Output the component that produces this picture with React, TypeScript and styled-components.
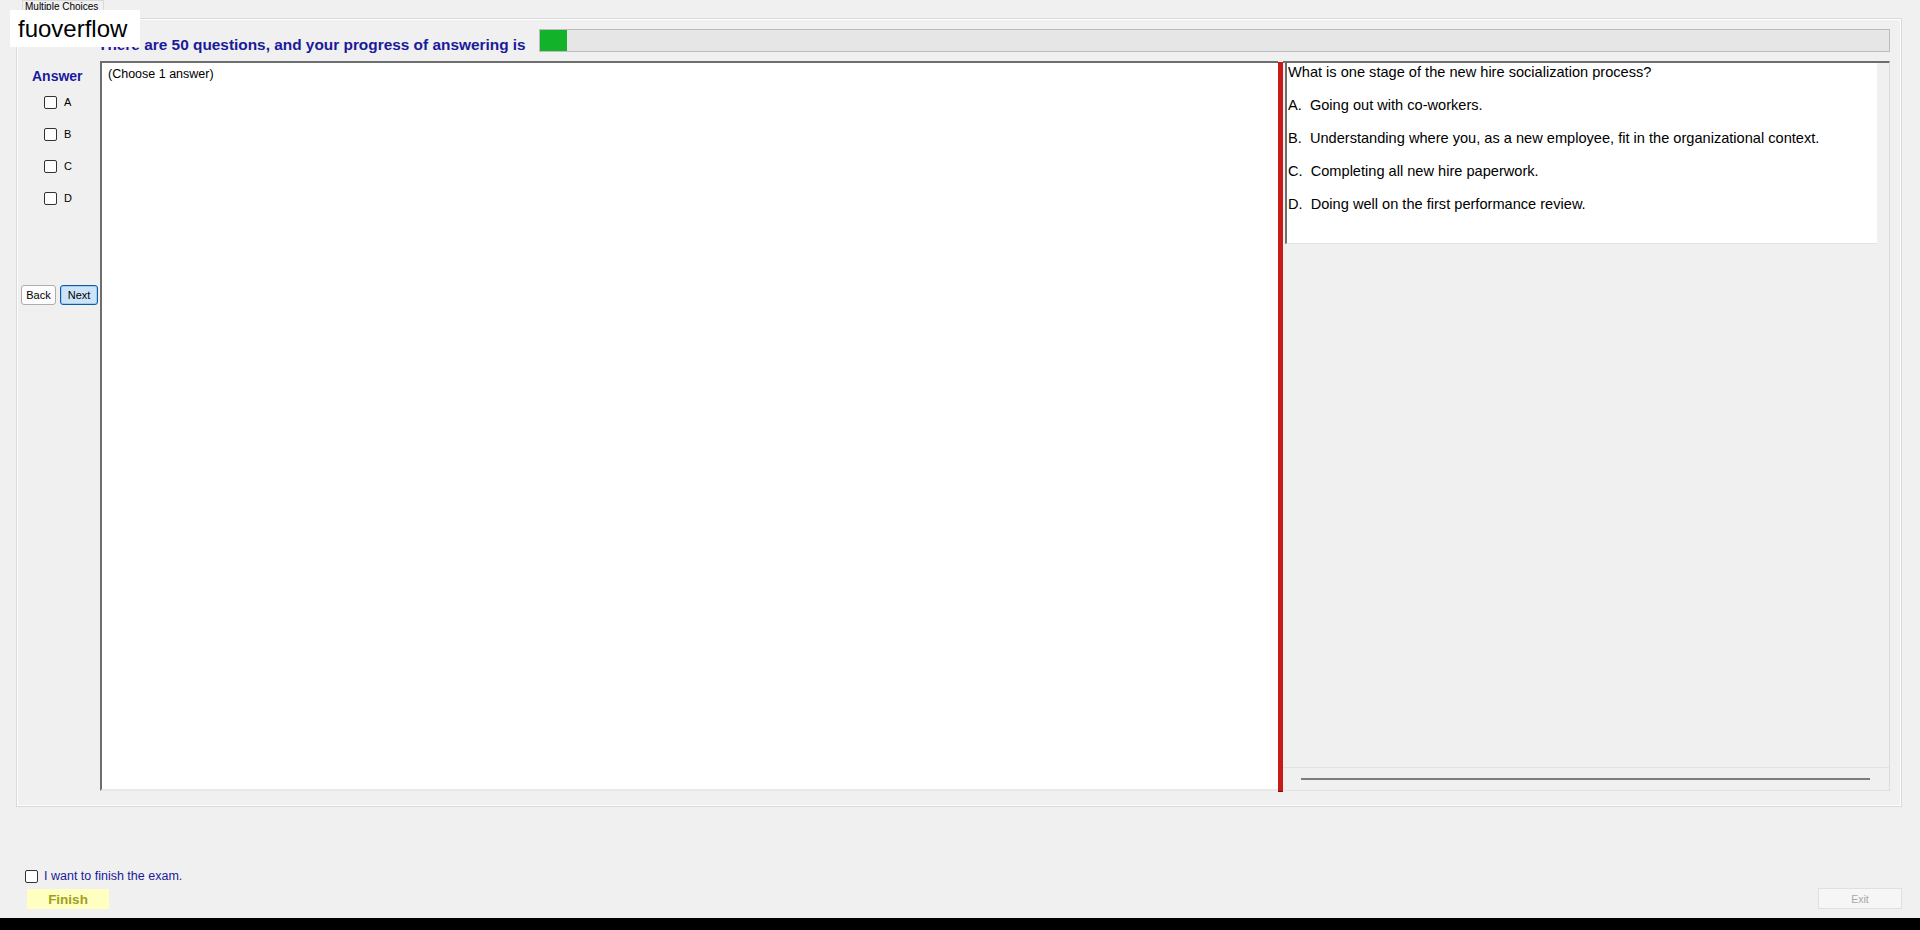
import * as React from "react";
import styled, { createGlobalStyle } from "styled-components";

const GlobalStyle = createGlobalStyle`
  html, body {
    margin: 0;
    padding: 0;
    background: #f0f0f0;
    font-family: "Liberation Sans", Arial, sans-serif;
    overflow: hidden;
  }
`;

const Window = styled("div")`
  position: relative;
  width: 1920px;
  height: 930px;
  display: flex;
  flex-direction: column;
  background: #f0f0f0;
`;

const Watermark = styled("div")`
  position: absolute;
  left: 10px;
  top: 10px;
  width: 122px;
  height: 37px;
  padding-left: 8px;
  background: #ffffff;
  color: #000000;
  font-size: 24px;
  line-height: 37px;
  z-index: 5;
`;

const TabStrip = styled("div")`
  height: 18px;
  display: flex;
  padding-left: 22px;
`;

const Tab = styled("div")`
  width: 82px;
  height: 18px;
  box-sizing: border-box;
  border: 1px solid #d9d9d9;
  border-bottom: none;
  background: #f0f0f0;
  font-size: 10px;
  line-height: 12px;
  padding-left: 2px;
  white-space: nowrap;
  overflow: hidden;
  color: #000000;
  position: relative;
  z-index: 1;
  margin-bottom: -1px;
`;

const TabPage = styled("div")`
  height: 789px;
  margin: 0 18px 0 16px;
  box-sizing: border-box;
  border: 1px solid #d9d9d9;
  box-shadow: inset 1px 1px 0 #ffffff, inset -1px -1px 0 #ffffff;
  display: flex;
  flex-direction: column;
  padding: 0 11px 15px 3px;
`;

const Header = styled("div")`
  height: 42px;
  display: flex;
  align-items: flex-start;
  padding-left: 78px;
  gap: 13px;
`;

const HeaderText = styled("div")`
  padding-top: 17px;
  font-size: 15.4px;
  line-height: 18px;
  font-weight: bold;
  color: #1a1a9a;
  white-space: nowrap;
`;

const ProgressTrack = styled("div")`
  flex: 1;
  margin-top: 10px;
  height: 23px;
  box-sizing: border-box;
  border: 1px solid #bcbcbc;
  background: #e6e6e6;
  display: flex;
`;

const ProgressFill = styled("div")`
  background: #12b22a;
  height: 100%;
`;

const Content = styled("div")`
  flex: 1;
  display: flex;
  min-height: 0;
`;

const AnswerColumn = styled("div")`
  width: 80px;
  display: flex;
  flex-direction: column;
  padding-top: 7px;
`;

const AnswerLabel = styled("div")`
  padding-left: 12px;
  font-size: 14px;
  line-height: 16px;
  font-weight: bold;
  color: #1a1a9a;
`;

const OptionList = styled("div")`
  display: flex;
  flex-direction: column;
  margin-top: 2px;
`;

const OptionRow = styled("label")`
  height: 32px;
  display: flex;
  align-items: center;
  padding-left: 24px;
  gap: 7px;
  font-size: 11px;
  color: #000000;
`;

const Box = styled("span")`
  width: 13px;
  height: 13px;
  box-sizing: border-box;
  border: 1px solid #333333;
  border-radius: 2px;
  background: #ffffff;
  display: inline-block;
  flex-shrink: 0;
`;

const NavRow = styled("div")`
  display: flex;
  gap: 4px;
  margin-top: 71px;
  padding-left: 1px;
`;

interface NavButtonProps {
  readonly $active?: boolean;
  readonly $width: number;
}

const NavButton = styled("button")<NavButtonProps>`
  width: ${({ $width }) => $width}px;
  height: 20px;
  padding: 0;
  font-family: "Liberation Sans", Arial, sans-serif;
  font-size: 11px;
  color: #000000;
  border-radius: 3px;
  border: 1px solid ${({ $active }) => ($active ? "#0a5ca8" : "#adadad")};
  background: ${({ $active }) => ($active ? "#cce4f7" : "#fdfdfd")};
  box-shadow: ${({ $active }) => ($active ? "inset 0 0 0 1px #a6cbea" : "none")};
`;

const QuestionPane = styled("div")`
  flex: 1;
  background: #ffffff;
  border-top: 2px solid #6e6e6e;
  border-left: 2px solid #6e6e6e;
  border-bottom: 2px solid #e8e8e8;
  padding: 3px 6px;
  font-size: 12.5px;
  line-height: 16px;
  color: #000000;
`;

const Splitter = styled("div")`
  width: 5px;
  background: #c91a1a;
  margin-top: 1px;
  box-shadow: 0 1px 0 #7a1010;
`;

const RightPane = styled("div")`
  width: 607px;
  display: flex;
  flex-direction: column;
  border-top: 2px solid #6e6e6e;
  border-right: 1px solid #dcdcdc;
  box-sizing: border-box;
`;

const QuestionBox = styled("div")`
  height: 180px;
  margin: 0 12px 0 2px;
  background: #ffffff;
  border-left: 2px solid #6e6e6e;
  border-bottom: 1px solid #e3e3e3;
  padding-left: 1px;
  font-size: 14.6px;
  line-height: 18px;
  color: #000000;
`;

const Line = styled("p")`
  margin: 0 0 15px 0;
  white-space: pre;
`;

const PaneFiller = styled("div")`
  flex: 1;
`;

const ScrollStrip = styled("div")`
  height: 22px;
  border-top: 1px solid #e3e3e3;
  border-bottom: 1px solid #e3e3e3;
  display: flex;
  align-items: center;
  padding: 0 19px 0 18px;
`;

const ScrollLine = styled("div")`
  flex: 1;
  height: 2px;
  background: #7c7c7c;
`;

const Footer = styled("div")`
  flex: 1;
  display: flex;
  align-items: flex-end;
  justify-content: space-between;
  padding: 0 18px 9px 25px;
`;

const FinishGroup = styled("div")`
  display: flex;
  flex-direction: column;
  gap: 5px;
`;

const FinishCheck = styled("label")`
  display: flex;
  align-items: center;
  gap: 6px;
  height: 16px;
  font-size: 12.5px;
  color: #1a1a9a;
`;

const FinishButton = styled("button")`
  width: 82px;
  height: 20px;
  margin-left: 2px;
  border: none;
  background: #ffffc2;
  color: #a0a01c;
  font-family: "Liberation Sans", Arial, sans-serif;
  font-size: 13.5px;
  font-weight: bold;
  padding: 0;
`;

const ExitButton = styled("button")`
  width: 84px;
  height: 21px;
  box-sizing: border-box;
  border: 1px solid #e0e0e0;
  background: #f6f6f6;
  color: #a8a8a8;
  font-family: "Liberation Sans", Arial, sans-serif;
  font-size: 10.5px;
  padding: 0;
`;

const Taskbar = styled("div")`
  height: 12px;
  background: #000000;
`;

const choices = ["A", "B", "C", "D"];

const questionLines = [
  "What is one stage of the new hire socialization process?",
  "A.  Going out with co-workers.",
  "B.  Understanding where you, as a new employee, fit in the organizational context.",
  "C.  Completing all new hire paperwork.",
  "D.  Doing well on the first performance review.",
];

const answered = 1;
const total = 50;

export default function App(): JSX.Element {
  // progress fill: one answered question, drawn with a minimum visible width
  const fillWidth = Math.max(26, Math.round((answered / total) * 1350));

  return (
    <Window>
      <GlobalStyle />
      <Watermark>fuoverflow</Watermark>
      <TabStrip>
        <Tab>Multiple Choices</Tab>
      </TabStrip>
      <TabPage>
        <Header>
          <HeaderText>There are {total} questions, and your progress of answering is</HeaderText>
          <ProgressTrack>
            <ProgressFill style={{ width: fillWidth }} />
          </ProgressTrack>
        </Header>
        <Content>
          <AnswerColumn>
            <AnswerLabel>Answer</AnswerLabel>
            <OptionList>
              {choices.map((c) => (
                <OptionRow key={c}>
                  <Box />
                  {c}
                </OptionRow>
              ))}
            </OptionList>
            <NavRow>
              <NavButton $width={35}>Back</NavButton>
              <NavButton $width={38} $active>
                Next
              </NavButton>
            </NavRow>
          </AnswerColumn>
          <QuestionPane>(Choose 1 answer)</QuestionPane>
          <Splitter />
          <RightPane>
            <QuestionBox>
              {questionLines.map((l) => (
                <Line key={l}>{l}</Line>
              ))}
            </QuestionBox>
            <PaneFiller />
            <ScrollStrip>
              <ScrollLine />
            </ScrollStrip>
          </RightPane>
        </Content>
      </TabPage>
      <Footer>
        <FinishGroup>
          <FinishCheck>
            <Box />
            I want to finish the exam.
          </FinishCheck>
          <FinishButton>Finish</FinishButton>
        </FinishGroup>
        <ExitButton disabled>Exit</ExitButton>
      </Footer>
      <Taskbar />
    </Window>
  );
}
